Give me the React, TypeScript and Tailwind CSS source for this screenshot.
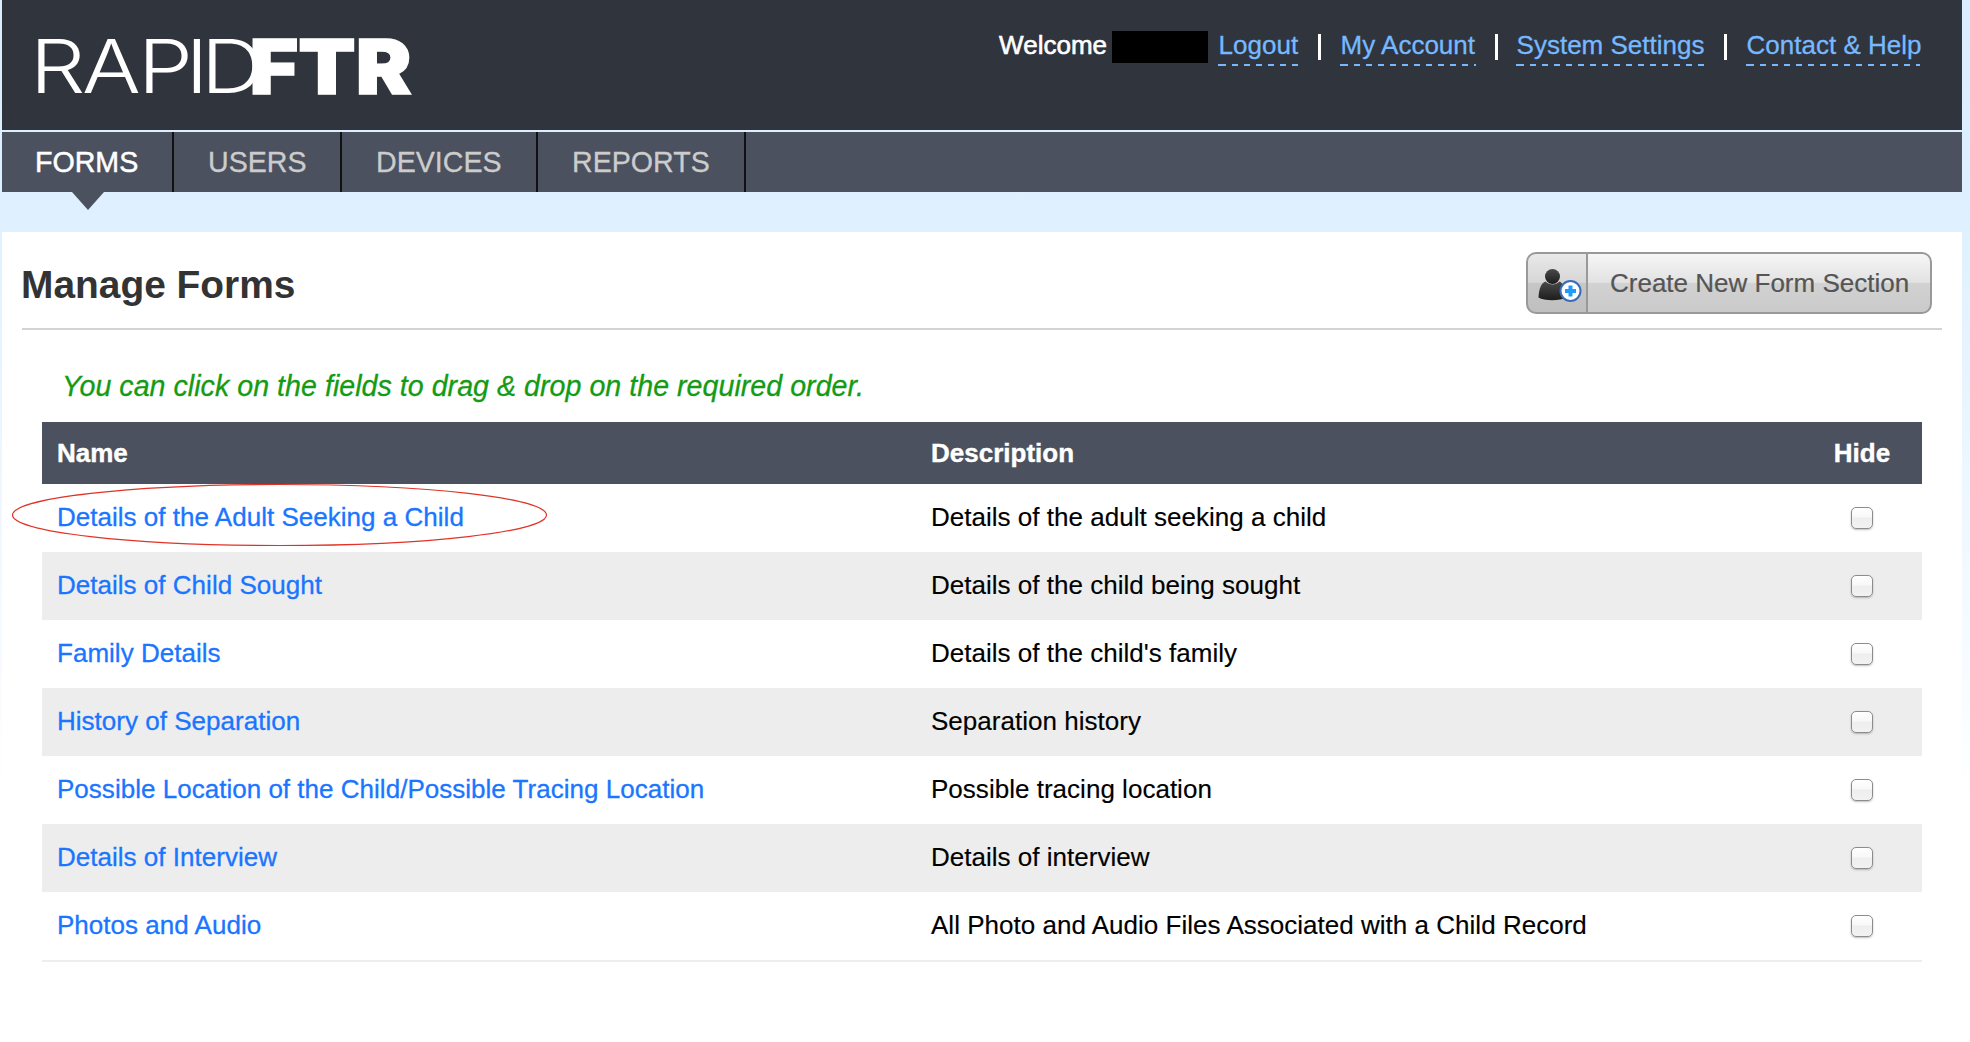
const tabs = [
  { label: "FORMS", width: "w-[172px]" },
  { label: "USERS", width: "w-[168px]" },
  { label: "DEVICES", width: "w-[196px]" },
  { label: "REPORTS", width: "w-[208px]" },
];

const rows = [
  ["Details of the Adult Seeking a Child", "Details of the adult seeking a child"],
  ["Details of Child Sought", "Details of the child being sought"],
  ["Family Details", "Details of the child's family"],
  ["History of Separation", "Separation history"],
  ["Possible Location of the Child/Possible Tracing Location", "Possible tracing location"],
  ["Details of Interview", "Details of interview"],
  ["Photos and Audio", "All Photo and Audio Files Associated with a Child Record"],
];

function Logo() {
  return (
    <svg width="440" height="130" viewBox="0 0 440 130" className="ml-5" fill="#fff">
      <g transform="scale(1.18 1)">
        <text x="6.8 50.8 98.3 138.6 151.6" y="93" fontFamily="Inter" fontWeight="300" fontSize="74">
          RAPID
        </text>
      </g>
      <text
        x="227.500"
        y="93.500"
        fontFamily="Inter"
        fontWeight="900"
        fontSize="76"
        textLength="162"
        lengthAdjust="spacingAndGlyphs"
        stroke="#fff"
        strokeWidth="1.500"
      >
        FTR
      </text>
    </svg>
  );
}

function HeaderLink({ children, width }: { children: string; width: string }) {
  return (
    <a
      href="#"
      className={`${width} block h-[38px] whitespace-nowrap pl-[0.6px] text-[#76b9ff] leading-[34px] [-webkit-text-stroke:0.3px_#76b9ff] bg-[linear-gradient(#76b9ff,#76b9ff),repeating-linear-gradient(to_right,transparent_0_2px,#76b9ff_2px_8px,transparent_8px_12px)] bg-[length:2px_2px,100%_2px] bg-[position:left_bottom,left_bottom] bg-no-repeat`}
    >
      {children}
    </a>
  );
}

function Separator({ spacing }: { spacing: string }) {
  return <span className={`${spacing} mt-[6px] h-[26px] w-[3px] bg-white`} />;
}

function AddUserIcon() {
  return (
    <svg width="50" height="36" viewBox="0 0 50 36">
      <defs>
        <linearGradient id="person" x1="0" y1="0" x2="0" y2="1">
          <stop offset="0" stopColor="#4a4a4a" />
          <stop offset="1" stopColor="#1d1d1d" />
        </linearGradient>
      </defs>
      <circle cx="20.500" cy="9.500" r="7.500" fill="url(#person)" />
      <path d="M6.500 30.500C7 22 9 16 13.500 14.500C17.500 18.500 23.500 18.500 27.500 14.500C31 16 34 22 34.500 30.500C28 34 12 34 6.500 30.500Z" fill="url(#person)" />
      <circle cx="38.500" cy="24" r="10" fill="#fff" stroke="#3a6cb8" strokeWidth="2" />
      <path d="M38.500 18.500V29.500M33 24H44" stroke="#1e9bff" strokeWidth="4" />
    </svg>
  );
}

export default function App() {
  return (
    <div className="h-[1042px] w-[1970px] overflow-hidden bg-[linear-gradient(#d9edff_0px,#dff1ff_230px,#ffffff_800px)] pl-0.5 pr-2 font-['Liberation_Sans',Arial,sans-serif] text-[26px] leading-[38px] text-black">
      <header className="flex h-[130px] justify-between bg-[#30343d]">
        <Logo />
        <div className="mr-[42px] mt-7 flex h-[38px]">
          <span className="leading-[34px] text-white [-webkit-text-stroke:0.6px_white]">Welcome</span>
          <span className="ml-[5px] mr-2.5 mt-[3px] h-8 w-24 bg-black" />
          <HeaderLink width="w-20">Logout</HeaderLink>
          <Separator spacing="ml-5 mr-[19px]" />
          <HeaderLink width="w-[136px]">My Account</HeaderLink>
          <Separator spacing="ml-[19px] mr-[18px]" />
          <HeaderLink width="w-[189px]">System Settings</HeaderLink>
          <Separator spacing="mx-[19px]" />
          <HeaderLink width="w-[174px]">Contact &amp; Help</HeaderLink>
        </div>
      </header>

      <nav className="mt-0.5 flex h-[60px] bg-[#4b515e] text-[28.6px] leading-[60px]">
        {tabs.map((tab, i) => (
          <a
            key={tab.label}
            href="#"
            className={`${tab.width} ${i === 0 ? "pl-[33px] text-white [-webkit-text-stroke:0.5px_white]" : "pl-[34px] text-[#cccccc] [-webkit-text-stroke:0.3px_#cccccc]"} relative block border-r-2 border-[#111111]`}
          >
            {tab.label}
            {i === 0 && (
              <svg width="32" height="18" viewBox="0 0 32 18" className="absolute left-[70px] top-[60px]">
                <path d="M0 0H32L16 18Z" fill="#4b515e" />
              </svg>
            )}
          </a>
        ))}
      </nav>

      <main className="mt-10 h-[810px] bg-white px-5 pt-5">
        <div className="flex h-[78px] justify-between border-b-2 border-[#d3d3d3] pr-2.5">
          <h1 className="-ml-px text-[38.9px] font-bold leading-[66px] text-[#333333]">Manage Forms</h1>
          <button className="flex h-[62px] w-[406px] overflow-hidden rounded-[10px] border-2 border-[#999999] bg-[linear-gradient(#f6f6f6_0%,#e2e2e2_49%,#d2d2d2_50%,#cacaca_100%)] text-[#555555]">
            <span className="flex h-full w-[60px] items-center justify-center border-r-2 border-[#999999] bg-black/5 pt-1">
              <AddUserIcon />
            </span>
            <span className="pl-[22px] leading-[58px] [-webkit-text-stroke:0.2px_#555555]">Create New Form Section</span>
          </button>
        </div>

        <p className="mt-[37px] pl-10 text-[28.6px] italic tracking-[0.03px] text-[#149b14] [-webkit-text-stroke:0.3px_#149b14]">
          You can click on the fields to drag &amp; drop on the required order.
        </p>

        <div className="relative mx-5 mt-[17px] w-[1880px] border-b-2 border-[#eeeeee]">
          <div className="flex h-[62px] items-center bg-[#4b515e] font-bold text-white [-webkit-text-stroke:0.4px_white]">
            <span className="w-[874px] pl-[15px]">Name</span>
            <span className="flex-1 pl-[15px]">Description</span>
            <span className="w-[120px] text-center">Hide</span>
          </div>
          {rows.map(([name, description]) => (
            <div key={name} className="flex h-[68px] items-center even:bg-white odd:bg-[#ededed]">
              <a
                href="#"
                className="w-[874px] pb-0.5 pl-[15px] tracking-[0.02px] text-[#1a75ff] [-webkit-text-stroke:0.3px_#1a75ff]"
              >
                {name}
              </a>
              <span className="flex-1 pb-0.5 pl-[15px] tracking-[0.02px] [-webkit-text-stroke:0.15px_black]">
                {description}
              </span>
              <span className="flex w-[120px] justify-center">
                <input
                  type="checkbox"
                  className="size-[22px] appearance-none rounded-[5px] border-[1.5px] border-[#8c8c8c] bg-[linear-gradient(#ffffff_0%,#f8f8f8_45%,#eeeeee_50%,#f2f2f2_100%)] shadow-[0_1px_2px_rgba(0,0,0,0.25)]"
                />
              </span>
            </div>
          ))}
          <svg width="538" height="64" viewBox="0 0 538 64" className="absolute left-[-31px] top-[61px]">
            <ellipse cx="268.500" cy="32" rx="267" ry="30.500" fill="none" stroke="#e03326" strokeWidth="1.200" />
          </svg>
        </div>
      </main>
    </div>
  );
}
